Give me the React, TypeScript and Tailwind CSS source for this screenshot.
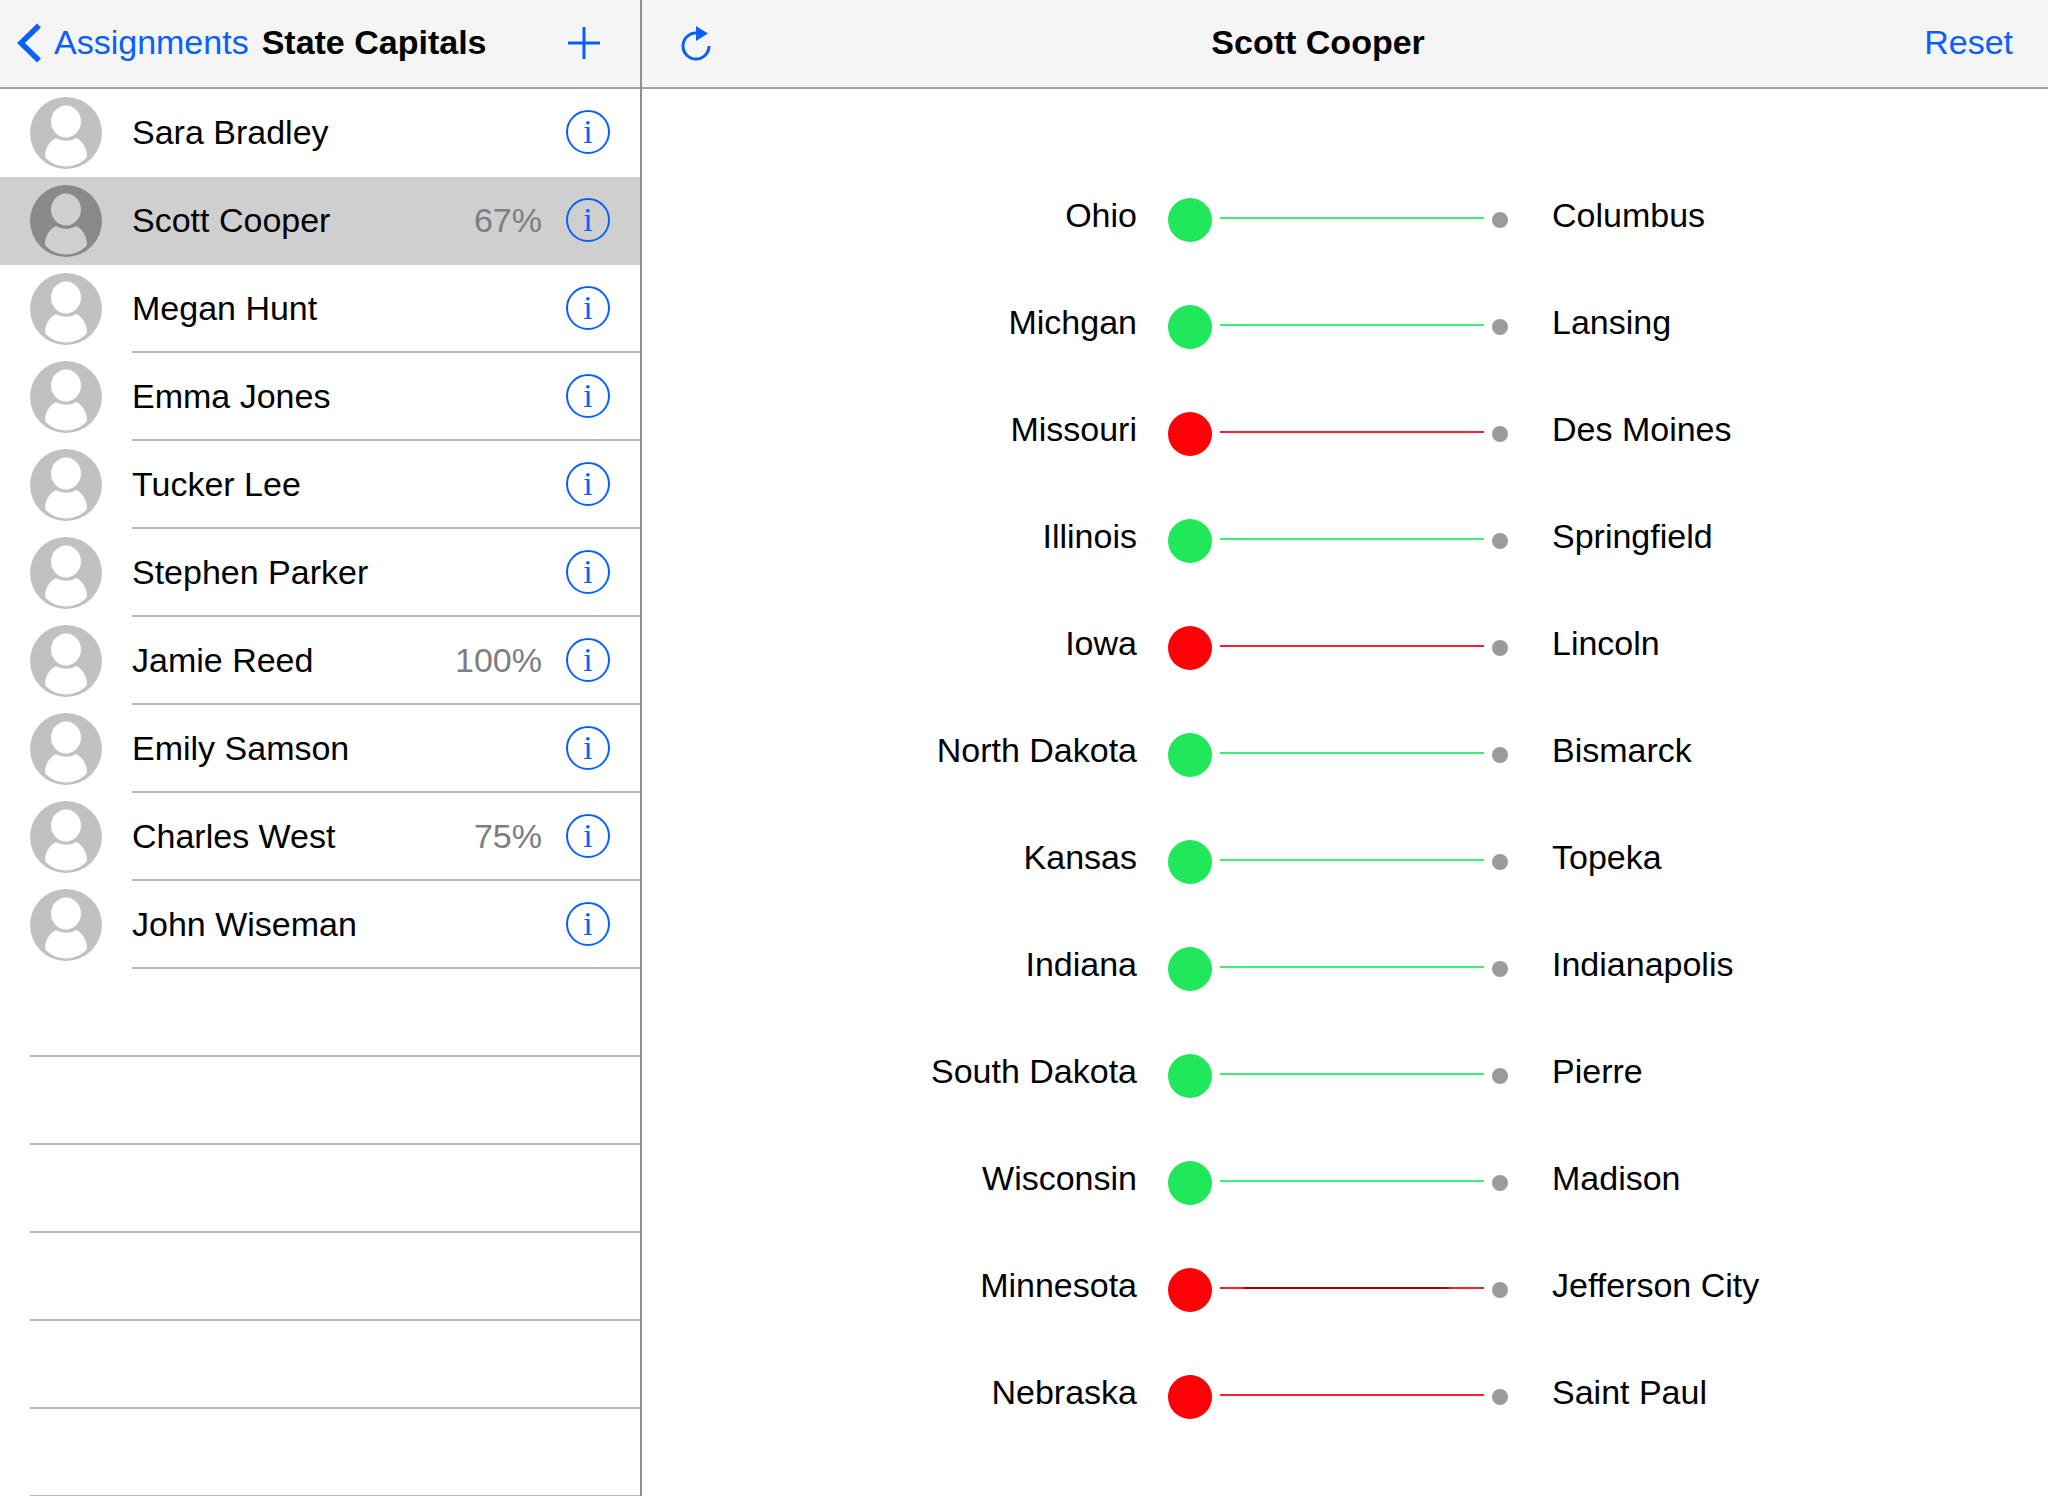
import React from 'react';

const students = [
  { name: 'Sara Bradley' },
  { name: 'Scott Cooper', score: '67%', selected: true },
  { name: 'Megan Hunt' },
  { name: 'Emma Jones' },
  { name: 'Tucker Lee' },
  { name: 'Stephen Parker' },
  { name: 'Jamie Reed', score: '100%' },
  { name: 'Emily Samson' },
  { name: 'Charles West', score: '75%' },
  { name: 'John Wiseman' },
];

const answers = [
  { state: 'Ohio', capital: 'Columbus', correct: true },
  { state: 'Michgan', capital: 'Lansing', correct: true },
  { state: 'Missouri', capital: 'Des Moines', correct: false },
  { state: 'Illinois', capital: 'Springfield', correct: true },
  { state: 'Iowa', capital: 'Lincoln', correct: false },
  { state: 'North Dakota', capital: 'Bismarck', correct: true },
  { state: 'Kansas', capital: 'Topeka', correct: true },
  { state: 'Indiana', capital: 'Indianapolis', correct: true },
  { state: 'South Dakota', capital: 'Pierre', correct: true },
  { state: 'Wisconsin', capital: 'Madison', correct: true },
  { state: 'Minnesota', capital: 'Jefferson City', correct: false, dark: true },
  { state: 'Nebraska', capital: 'Saint Paul', correct: false },
];

function Avatar({ selected }: { selected?: boolean }) {
  return (
    <svg width="72" height="72" viewBox="0 0 72 72" className="shrink-0">
      <circle cx="36" cy="36" r="36" className={selected ? 'fill-[#898989]' : 'fill-[#c1c1c1]'} />
      <g className={selected ? 'fill-[#cfcfcf]' : 'fill-white'}>
        <ellipse cx="36" cy="24.5" rx="15" ry="16" />
        <path d="M15 60 C15 50 20 44 26 41 C31 44.5 41 44.5 46 41 C52 44 57 50 57 60 C52 66 44 69.5 36 69.5 C28 69.5 20 66 15 60 Z" />
      </g>
    </svg>
  );
}

function InfoButton() {
  return (
    <div className="w-[44px] h-[44px] shrink-0 rounded-full border-2 border-[#0a60ff] flex items-center justify-center text-[#0a60ff] text-[34px] leading-none font-['Liberation_Serif',serif]">
      i
    </div>
  );
}

function StudentRow({ name, score, selected, last }: { name: string; score?: string; selected?: boolean; last?: boolean }) {
  return (
    <div className={`h-[88px] pl-[30px] pr-[30px] flex items-center ${selected ? 'bg-[#cfcfcf]' : ''}`}>
      <Avatar selected={selected} />
      <div
        className={`ml-[30px] -mr-[30px] pr-[30px] h-[88px] flex-1 flex items-center border-b-2 ${
          selected || name === 'Sara Bradley' ? 'border-transparent' : 'border-[#b8b8b8]'
        }`}
      >
        <span className="flex-1 text-[34px] text-black">{name}</span>
        {score && <span className="text-[34px] text-[#7d7d82] mr-[24px]">{score}</span>}
        <InfoButton />
      </div>
    </div>
  );
}

function AnswerRow({ state, capital, correct, dark }: { state: string; capital: string; correct: boolean; dark?: boolean }) {
  return (
    <div className="h-[107px] flex items-center">
      <span className="w-[495px] mb-[8px] text-right text-[34px] text-black">{state}</span>
      <div className={`ml-[31px] w-[44px] h-[44px] rounded-full ${correct ? 'bg-[#20e85a]' : 'bg-[#ff0007]'}`} />
      <div className={`ml-[8px] mb-[4px] w-[264px] h-[2px] flex justify-center ${correct ? 'bg-[#3bef77]' : 'bg-[#ff2038]'}`}>
        {dark && <div className="w-[206px] h-[2px] bg-[#b00000] mr-[12px]" />}
      </div>
      <div className="ml-[8px] w-[16px] h-[16px] rounded-full bg-[#9b9b9b]" />
      <span className="ml-[44px] mb-[8px] text-[34px] text-black">{capital}</span>
    </div>
  );
}

export default function App() {
  return (
    <div className="w-[2048px] h-[1496px] flex bg-white overflow-hidden font-['Liberation_Sans',sans-serif]">
      {/* left list */}
      <div className="w-[642px] shrink-0 border-r-2 border-[#8e8e93] flex flex-col">
        <div className="h-[89px] shrink-0 bg-[#f5f5f5] border-b-2 border-[#a4a4a4] flex items-center pl-[16px] pr-[40px] pb-[2px]">
          <svg width="26" height="40" viewBox="0 0 26 40" className="shrink-0" fill="none">
            <path d="M23 2.5 L5 20 L23 37.5" stroke="#0a60ff" strokeWidth="5.5" />
          </svg>
          <span className="ml-[12px] text-[34px] text-[#0a60ff]">Assignments</span>
          <span className="ml-[13px] flex-1 text-[34px] font-bold text-black">State Capitals</span>
          <svg width="32" height="32" viewBox="0 0 32 32" className="shrink-0">
            <path d="M16 0 V32 M0 16 H32" stroke="#0a60ff" strokeWidth="3" />
          </svg>
        </div>
        {students.map((s) => (
          <StudentRow key={s.name} {...s} />
        ))}
        {[0, 1, 2, 3, 4, 5].map((i) => (
          <div key={i} className="h-[88px] shrink-0 ml-[30px] border-b-2 border-[#b8b8b8]" />
        ))}
      </div>

      {/* right detail */}
      <div className="flex-1 flex flex-col">
        <div className="h-[89px] shrink-0 bg-[#f5f5f5] border-b-2 border-[#a4a4a4] flex items-center justify-between pl-[38px] pr-[35px] pb-[2px] relative">
          <svg width="32" height="36" viewBox="0 0 32 36" fill="none">
            <path d="M16 8 A13 13 0 1 0 29 21" stroke="#0a60ff" strokeWidth="3" />
            <path d="M16 1 L28 8.5 L16 16 Z" fill="#0a60ff" />
          </svg>
          <span className="text-[34px] font-bold text-black">Scott Cooper</span>
          <span className="text-[34px] text-[#0a60ff]">Reset</span>
        </div>
        <div className="pt-[77px]">
          {answers.map((a) => (
            <AnswerRow key={a.state} {...a} />
          ))}
        </div>
      </div>
    </div>
  );
}
